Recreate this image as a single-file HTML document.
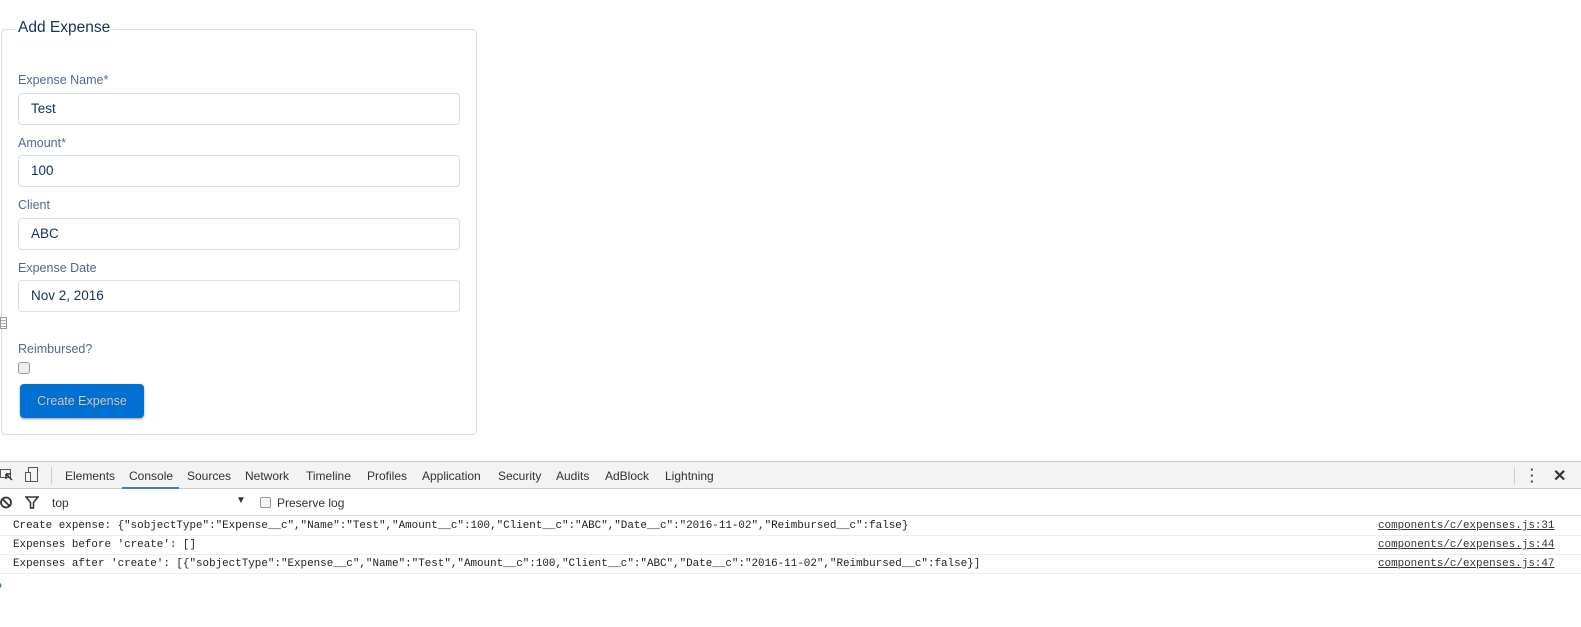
<!DOCTYPE html>
<html><head><meta charset="utf-8"><style>
*{box-sizing:border-box;margin:0;padding:0}
body{width:1581px;height:627px;background:#fff;font-family:"Liberation Sans",sans-serif;position:relative;overflow:hidden}
.fs{position:absolute;left:1px;top:29px;width:476px;height:406px;border:1px solid #d8dde6;border-radius:4px}
.leg{position:absolute;left:15px;top:19px;background:#fff;padding:0 3px;font-size:15.5px;color:#16325c}
.lbl{position:absolute;left:18px;font-size:12.5px;color:#54698d}
.inp{position:absolute;left:18px;width:442px;height:32px;border:1px solid #d8dde6;border-radius:4px;padding-left:12px;line-height:30px;font-size:13.5px;color:#16325c}
.btn{position:absolute;left:20px;top:384px;width:124px;height:34px;background:#0070d2;border-radius:4px;color:#bcd2ea;font-size:12.5px;text-align:center;line-height:34px;box-shadow:0 1px 2px rgba(0,0,0,.4);text-shadow:0 0 1px #345}
.cb{position:absolute;left:18px;top:362px;width:12px;height:12px;border:1px solid #999;border-radius:3px;background:#eee}
.dt{position:absolute;left:0;top:461px;width:1581px;height:28px;background:#f3f3f3;border-top:1px solid #ccc;border-bottom:1px solid #ccc;font-size:12px;color:#333}
.tab{position:absolute;top:7px}
.fb{position:absolute;left:0;top:489px;width:1581px;height:27px;border-bottom:1px solid #ddd;font-size:12px;color:#333}
.row{position:absolute;left:0;width:1581px;height:19px;border-bottom:1px solid #eee;font-family:"Liberation Mono",monospace;font-size:10.9px;color:#222;line-height:19px}
.row .m{position:absolute;left:13px}
.row .s{position:absolute;left:1378px;text-decoration:underline;color:#333}
</style></head><body>
<div class="fs"></div>
<div class="leg">Add Expense</div>
<div class="lbl" style="top:73px">Expense Name*</div>
<div class="inp" style="top:93px">Test</div>
<div class="lbl" style="top:136px">Amount*</div>
<div class="inp" style="top:155px">100</div>
<div class="lbl" style="top:198px">Client</div>
<div class="inp" style="top:218px">ABC</div>
<div class="lbl" style="top:261px">Expense Date</div>
<div class="inp" style="top:280px">Nov 2, 2016</div>
<div style="position:absolute;left:0;top:317px;width:7px;height:12px;border:1px solid #999;background:repeating-linear-gradient(#fff 0 2px,#aaa 2px 3px)"></div>
<div class="lbl" style="top:342px">Reimbursed?</div>
<div class="cb"></div>
<div class="btn">Create Expense</div>

<div class="dt">
<svg style="position:absolute;left:0;top:6px" width="14" height="14"><rect x="0.5" y="1.5" width="10" height="8" fill="none" stroke="#555"/><path d="M6 6l6 6M6 6v5M6 6h5" stroke="#333" stroke-width="1.5" fill="none"/></svg>
<svg style="position:absolute;left:25px;top:5px" width="14" height="16"><rect x="3.5" y="0.5" width="9" height="14" fill="none" stroke="#555"/><rect x="0.5" y="5.5" width="5" height="9" fill="#f3f3f3" stroke="#555"/></svg>
<div style="position:absolute;left:51px;top:5px;width:1px;height:17px;background:#ccc"></div>
<span class="tab" style="left:65px">Elements</span>
<span class="tab" style="left:129px">Console</span>
<div style="position:absolute;left:122px;top:25px;width:57px;height:2px;background:#3879d9"></div>
<span class="tab" style="left:187px">Sources</span>
<span class="tab" style="left:245px">Network</span>
<span class="tab" style="left:306px">Timeline</span>
<span class="tab" style="left:367px">Profiles</span>
<span class="tab" style="left:422px">Application</span>
<span class="tab" style="left:498px">Security</span>
<span class="tab" style="left:556px">Audits</span>
<span class="tab" style="left:605px">AdBlock</span>
<span class="tab" style="left:665px">Lightning</span>
<div style="position:absolute;left:1514px;top:5px;width:1px;height:17px;background:#ccc"></div>
<span style="position:absolute;left:1530px;top:5px;font-weight:bold;font-size:13px;line-height:6px">·<br>·<br>·</span>
<span style="position:absolute;left:1553px;top:4px;font-size:16px;font-weight:bold">✕</span>
</div>
<div class="fb">
<svg style="position:absolute;left:0;top:7px" width="13" height="13"><circle cx="6" cy="6.5" r="5" fill="none" stroke="#333" stroke-width="1.8"/><path d="M2.5 3l7 7" stroke="#333" stroke-width="1.8"/></svg>
<svg style="position:absolute;left:25px;top:7px" width="14" height="13"><path d="M1 1h12L8.5 6.5V12h-3V6.5z" fill="none" stroke="#333" stroke-width="1.5"/></svg>
<span style="position:absolute;left:52px;top:7px">top</span>
<span style="position:absolute;left:236px;top:6px;font-size:10px">▼</span>
<div style="position:absolute;left:260px;top:8px;width:11px;height:11px;border:1px solid #999;border-radius:2px;background:#f5f5f5"></div>
<span style="position:absolute;left:277px;top:7px">Preserve log</span>
</div>
<div class="row" style="top:517px"><span class="m">Create expense: {"sobjectType":"Expense__c","Name":"Test","Amount__c":100,"Client__c":"ABC","Date__c":"2016-11-02","Reimbursed__c":false}</span><span class="s">components/c/expenses.js:31</span></div>
<div class="row" style="top:536px"><span class="m">Expenses before 'create': []</span><span class="s">components/c/expenses.js:44</span></div>
<div class="row" style="top:555px"><span class="m">Expenses after 'create': [{"sobjectType":"Expense__c","Name":"Test","Amount__c":100,"Client__c":"ABC","Date__c":"2016-11-02","Reimbursed__c":false}]</span><span class="s">components/c/expenses.js:47</span></div>
<span style="position:absolute;left:-2px;top:577px;color:#367cf1;font-size:13px;font-weight:bold">›</span>
</body></html>
